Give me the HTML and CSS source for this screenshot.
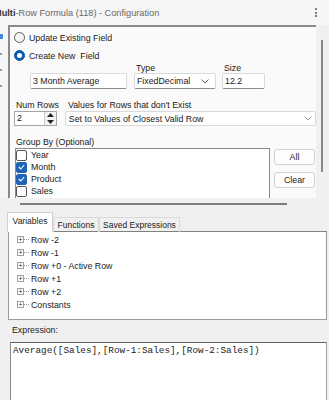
FILE: index.html
```html
<!DOCTYPE html>
<html>
<head>
    <title>Multi-Row Formula - Configuration</title>
    <link rel="stylesheet" href="styles.css">
</head>
<body>
    <div class="titlebar">
        <span class="title"><b>Multi</b>-Row Formula (118) - Configuration</span>
        <span class="kebab"><i></i><i></i><i></i></span>
    </div>

    <div class="config">
        <div class="rail">
            <span class="rail-blue"></span>
            <span class="rail-dot"></span>
            <span class="rail-dot"></span>
            <span class="rail-dot"></span>
        </div>

        <div class="panel">
            <div class="opt"><span class="radio"></span>Update Existing Field</div>
            <div class="opt"><span class="radio on"></span>Create New&nbsp; Field</div>

            <div class="fields">
                <div class="col">
                    <label>&nbsp;</label>
                    <div class="input name">3 Month Average</div>
                </div>
                <div class="col">
                    <label>Type</label>
                    <div class="input select type">FixedDecimal
                        <svg width="8" height="5" viewBox="0 0 8 5"><path d="M0.5 0.5 L4 4 L7.5 0.5" fill="none" stroke="#666" stroke-width="1"/></svg>
                    </div>
                </div>
                <div class="col">
                    <label>Size</label>
                    <div class="input size">12.2</div>
                </div>
            </div>

            <div class="labels-row">
                <span class="lbl-num">Num Rows</span>
                <span class="lbl-values">Values for Rows that don't Exist</span>
            </div>
            <div class="controls-row">
                <div class="spinner">
                    <span class="spin-value">2</span>
                    <span class="spin-btns">
                        <svg width="7" height="4" viewBox="0 0 7 4"><path d="M0 4 L3.5 0 L7 4 Z" fill="#222"/></svg>
                        <svg width="7" height="4" viewBox="0 0 7 4"><path d="M0 0 L3.5 4 L7 0 Z" fill="#222"/></svg>
                    </span>
                </div>
                <div class="input select rows-drop">Set to Values of Closest Valid Row
                    <svg width="8" height="5" viewBox="0 0 8 5"><path d="M0.5 0.5 L4 4 L7.5 0.5" fill="none" stroke="#999" stroke-width="1"/></svg>
                </div>
            </div>

            <div class="group-label">Group By (Optional)</div>
            <div class="group-row">
                <div class="listbox">
                    <div class="item"><span class="check"></span>Year</div>
                    <div class="item"><span class="check on"><svg width="7" height="6" viewBox="0 0 7 6"><path d="M0.8 3 L2.8 5 L6.2 1" fill="none" stroke="#fff" stroke-width="1.1"/></svg></span>Month</div>
                    <div class="item"><span class="check on"><svg width="7" height="6" viewBox="0 0 7 6"><path d="M0.8 3 L2.8 5 L6.2 1" fill="none" stroke="#fff" stroke-width="1.1"/></svg></span>Product</div>
                    <div class="item"><span class="check"></span>Sales</div>
                </div>
                <div class="buttons">
                    <div class="btn">All</div>
                    <div class="btn">Clear</div>
                </div>
            </div>
        </div>

        <div class="vscroll"><div class="vthumb"></div></div>
    </div>

    <div class="hscroll"><div class="hthumb"></div></div>

    <div class="tabs">
        <div class="tab active">Variables</div>
        <div class="tab">Functions</div>
        <div class="tab wide">Saved Expressions</div>
    </div>
    <div class="tabpanel">
        <div class="node"><span class="pbox">+</span><span class="dash"></span>Row -2</div>
        <div class="node"><span class="pbox">+</span><span class="dash"></span>Row -1</div>
        <div class="node"><span class="pbox">+</span><span class="dash"></span>Row +0 - Active Row</div>
        <div class="node"><span class="pbox">+</span><span class="dash"></span>Row +1</div>
        <div class="node"><span class="pbox">+</span><span class="dash"></span>Row +2</div>
        <div class="node"><span class="pbox">+</span><span class="dash"></span>Constants</div>
    </div>

    <div class="expr-label">Expression:</div>
    <div class="expr">Average([Sales],[Row-1:Sales],[Row-2:Sales])</div>
</body>
</html>
```

FILE: styles.css
```css
body {
    margin: 0;
    width: 329px;
    height: 400px;
    overflow: hidden;
    background-color: #f0f0f0;
    font-family: "Liberation Sans", Arial, sans-serif;
    font-size: 8.8px;
    color: #1b1b1b;
}

/* title bar */
.titlebar {
    height: 25px;
    display: flex;
    align-items: center;
    justify-content: space-between;
    background-color: #f6f6f6;
    overflow: hidden;
}
.title {
    margin-left: -6px;
    font-size: 9.2px;
    color: #666;
    white-space: nowrap;
}
.title b {
    color: #333;
}
.kebab {
    display: flex;
    flex-direction: column;
    gap: 1.5px;
    margin-right: 12px;
}
.kebab i {
    width: 2px;
    height: 2px;
    border-radius: 50%;
    background-color: #555;
}

/* configuration area */
.config {
    display: flex;
    height: 173px;
}
.rail {
    width: 8px;
    background-color: #f4f6f9;
    display: flex;
    flex-direction: column;
    align-items: flex-start;
    padding-top: 9px;
    box-sizing: border-box;
}
.rail-blue {
    width: 3px;
    height: 5px;
    background-color: #4a8ad4;
}
.rail-dot {
    width: 2px;
    height: 2px;
    margin-top: 14px;
    background-color: #999;
}
.panel {
    width: 308px;
    border-top: 2px solid #8a8a8a;
    border-left: 2px solid #8a8a8a;
    background-color: #fafafa;
    padding: 5px 0 0 4px;
    box-sizing: border-box;
    overflow: hidden;
}
.vscroll {
    width: 13px;
    padding-top: 15px;
    box-sizing: border-box;
}
.vthumb {
    width: 2px;
    height: 132px;
    margin-left: 5px;
    background-color: #8a8a8a;
}

.opt {
    display: flex;
    align-items: center;
    gap: 4px;
    height: 11px;
    white-space: nowrap;
}
.opt + .opt {
    margin-top: 7px;
}
.radio {
    width: 11px;
    height: 11px;
    border: 1px solid #5c5c5c;
    border-radius: 50%;
    box-sizing: border-box;
    background-color: #f4f4f4;
}
.radio.on {
    display: flex;
    align-items: center;
    justify-content: center;
    border-color: #0b5cad;
    background-color: #0b5cad;
}
.radio.on::after {
    content: "";
    width: 5px;
    height: 5px;
    border-radius: 50%;
    background-color: #fff;
}

.fields {
    display: flex;
    margin-top: 3px;
    margin-left: 16px;
}
.col {
    display: flex;
    flex-direction: column;
}
.col label {
    height: 9px;
    line-height: 9px;
    padding-left: 2px;
}
.col + .col {
    margin-left: 7px;
}
.col:last-child {
    margin-left: 6px;
}
.input {
    height: 16px;
    line-height: 15px;
    padding-left: 2px;
    background-color: #fff;
    border: 1px solid #dadada;
    border-bottom-color: #8d8d8d;
    border-radius: 2px;
    box-sizing: border-box;
    white-space: nowrap;
}
.name {
    width: 97px;
}
.type {
    width: 82px;
}
.size {
    width: 43px;
}
.select {
    display: flex;
    align-items: center;
    justify-content: space-between;
    padding-right: 6px;
}

.labels-row {
    display: flex;
    margin-top: 11px;
    line-height: 11px;
    height: 11px;
}
.lbl-num {
    width: 50px;
    padding-left: 2px;
}
.lbl-values {
    padding-left: 2px;
}
.controls-row {
    display: flex;
    gap: 8px;
    height: 15px;
}
.spinner {
    width: 44px;
    display: flex;
    justify-content: space-between;
    background-color: #fff;
    border: 1px solid #a5a5a5;
    box-sizing: border-box;
}
.spin-value {
    padding-left: 2px;
    line-height: 13px;
}
.spin-btns {
    width: 11px;
    display: flex;
    flex-direction: column;
    align-items: center;
    justify-content: space-around;
    background-color: #f3f3f3;
    border-left: 1px solid #ccc;
}
.rows-drop {
    width: 258px;
    height: 15px;
    line-height: 14px;
    padding-left: 3px;
    padding-right: 3px;
    border-color: #dadada;
}

.group-label {
    margin-top: 10px;
    height: 12px;
    line-height: 12px;
    padding-left: 2px;
}
.group-row {
    display: flex;
    gap: 4px;
}
.listbox {
    width: 255px;
    height: 62px;
    margin-left: 1px;
    background-color: #fff;
    border: 1px solid #8a8a8a;
    box-sizing: border-box;
}
.item {
    display: flex;
    align-items: center;
    gap: 4px;
    height: 12px;
}
.check {
    width: 11px;
    height: 11px;
    border: 1px solid #555;
    border-radius: 2px;
    box-sizing: border-box;
    background-color: #fff;
}
.check.on {
    display: flex;
    align-items: center;
    justify-content: center;
    background-color: #1f64b4;
    border-color: #1f64b4;
}
.buttons {
    display: flex;
    flex-direction: column;
    gap: 7px;
    margin-top: 1px;
}
.btn {
    width: 41px;
    height: 16px;
    line-height: 15px;
    text-align: center;
    background-color: #fdfdfd;
    border: 1px solid #d2d2d2;
    border-radius: 3px;
    box-sizing: border-box;
}

.hscroll {
    height: 15px;
    padding-top: 5px;
    box-sizing: border-box;
}
.hthumb {
    width: 267px;
    height: 2px;
    margin-left: 20px;
    background-color: #7d7d7d;
}

/* tabs */
.tabs {
    display: flex;
    align-items: flex-end;
    height: 19px;
    padding-left: 7px;
}
.tab {
    width: 46px;
    height: 15px;
    line-height: 14px;
    text-align: center;
    font-size: 8.5px;
    border: 1px solid #d9d9d9;
    border-bottom: none;
    box-sizing: border-box;
    white-space: nowrap;
}
.tab.active {
    height: 20px;
    line-height: 16px;
    background-color: #fff;
    border-color: #cfcfcf;
    position: relative;
    z-index: 1;
}
.tab.wide {
    width: 81px;
}
.tabpanel {
    width: 319px;
    height: 89px;
    margin-left: 8px;
    margin-top: -1px;
    padding-top: 1px;
    background-color: #fff;
    border: 1px solid #9a9a9a;
    border-top-color: #808080;
    box-sizing: border-box;
}
.node {
    display: flex;
    align-items: center;
    height: 13px;
    white-space: nowrap;
}
.pbox {
    width: 7px;
    height: 7px;
    margin-left: 8px;
    border: 1px solid #a0a0a0;
    box-sizing: border-box;
    font-size: 7px;
    line-height: 5px;
    text-align: center;
    color: #333;
    overflow: hidden;
}
.dash {
    width: 5px;
    margin-right: 2px;
    border-top: 1px dotted #999;
}

.expr-label {
    margin-top: 4px;
    height: 13px;
    line-height: 13px;
    padding-left: 12px;
}
.expr {
    width: 317px;
    height: 70px;
    margin-top: 5px;
    margin-left: 10px;
    padding: 2px 0 0 2px;
    background-color: #fff;
    border: 1px solid #a0a0a0;
    border-top-color: #646464;
    border-left-color: #8a8a8a;
    box-sizing: border-box;
    font-family: "Liberation Mono", "Courier New", monospace;
    font-size: 9.35px;
    line-height: 12px;
    white-space: nowrap;
}
```
